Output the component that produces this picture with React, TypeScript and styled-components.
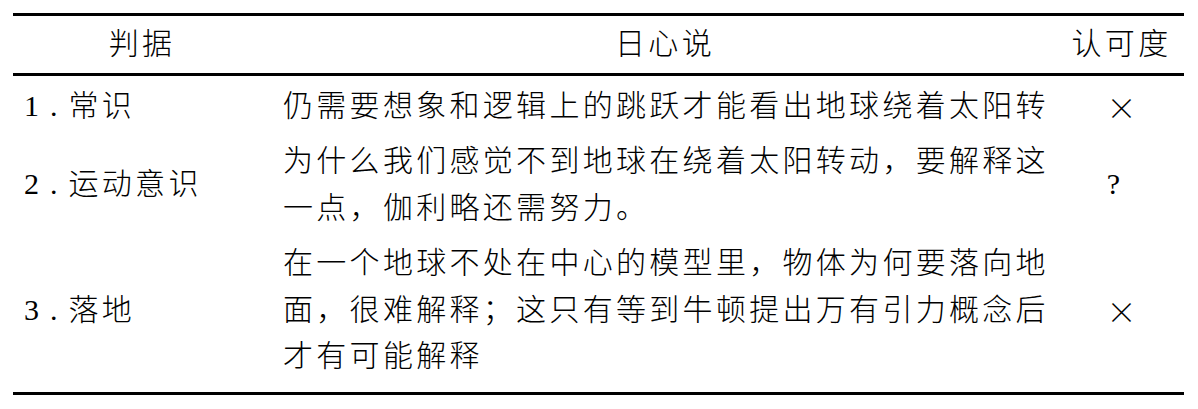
import styled, { createGlobalStyle } from "styled-components";

type Row = {
  num: string;
  label: string;
  text: string;
  mark: string;
};

const rows: Row[] = [
  {
    num: "1.",
    label: "常识",
    text: "仍需要想象和逻辑上的跳跃才能看出地球绕着太阳转",
    mark: "×",
  },
  {
    num: "2.",
    label: "运动意识",
    text: "为什么我们感觉不到地球在绕着太阳转动，要解释这一点，伽利略还需努力。",
    mark: "?",
  },
  {
    num: "3.",
    label: "落地",
    text: "在一个地球不处在中心的模型里，物体为何要落向地面，很难解释；这只有等到牛顿提出万有引力概念后才有可能解释",
    mark: "×",
  },
];

const GlobalStyle = createGlobalStyle`
  html, body {
    margin: 0;
    padding: 0;
    background: #ffffff;
  }
  body {
    font-family: "Liberation Serif", "Noto Sans CJK SC", serif;
    color: #000000;
  }
`;

function App() {
  return (
    <>
      <GlobalStyle />
      <ScTable>
        <colgroup>
          <col style={{ width: 258 }} />
          <col style={{ width: 788 }} />
          <col style={{ width: 125 }} />
        </colgroup>
        <thead>
          <tr>
            <ScHead>判据</ScHead>
            <ScHead>日心说</ScHead>
            <ScHead $narrow>认可度</ScHead>
          </tr>
        </thead>
        <ScBody>
          {rows.map((row) => (
            <tr key={row.num}>
              <ScLabelCell>
                <ScNum>{row.num}</ScNum>
                {row.label}
              </ScLabelCell>
              <ScTextCell>{row.text}</ScTextCell>
              <ScMarkCell $latin={row.mark === "?"}>{row.mark}</ScMarkCell>
            </tr>
          ))}
        </ScBody>
      </ScTable>
    </>
  );
}

const ScTable = styled.table`
  margin: 13px 0 0 13px;
  width: 1171px;
  table-layout: fixed;
  border-collapse: separate;
  border-spacing: 0;
  border-top: 3px solid #000;
  border-bottom: 3px solid #000;
  font-size: 30px;
  line-height: 46.5px;
  letter-spacing: 3.3px;
  font-weight: 300;
`;

const ScHead = styled.th<{ $narrow?: boolean }>`
  padding: 5px ${(p) => (p.$narrow ? "0" : "12px")};
  height: 46px;
  font-weight: 300;
  text-align: center;
  border-bottom: 3px solid #000;
  white-space: nowrap;
`;

const ScBody = styled.tbody`
  td {
    padding-top: 4.5px;
    padding-bottom: 4.5px;
  }
  tr:first-child td {
    padding-top: 7px;
  }
  tr:last-child td {
    padding-bottom: 12px;
  }
`;

const ScLabelCell = styled.td`
  padding-left: 11px;
  padding-right: 8px;
  vertical-align: middle;
  white-space: nowrap;
`;

const ScNum = styled.span`
  letter-spacing: 11px;
`;

const ScTextCell = styled.td`
  padding-left: 12px;
  padding-right: 4px;
  vertical-align: middle;
  text-align: left;
`;

const ScMarkCell = styled.td<{ $latin?: boolean }>`
  padding-left: 0;
  padding-right: ${(p) => (p.$latin ? "16px" : "0")};
  text-align: center;
  vertical-align: middle;
  font-family: ${(p) =>
    p.$latin ? `"Liberation Serif", serif` : `"Noto Sans CJK SC", sans-serif`};
  font-weight: 200;
  letter-spacing: 0;
`;

export default App;
